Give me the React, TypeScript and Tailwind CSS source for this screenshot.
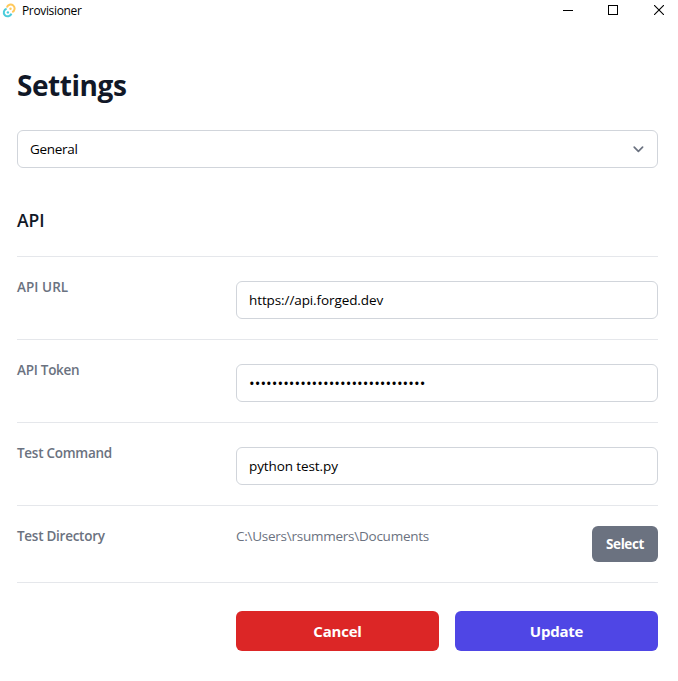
import type { ReactNode } from 'react';

function Field({ label, children }: { label: ReactNode; children: ReactNode }) {
  return (
    <div className="grid grid-cols-[203px_422px] gap-4 border-b border-[#e5e7eb] py-5">
      <dt className="text-[13.5px] leading-5 font-semibold tracking-[-0.27px] text-[#6b7280]">{label}</dt>
      <dd className="flex">{children}</dd>
    </div>
  );
}

function TextBox({ children }: { children: ReactNode }) {
  return (
    <div className="mt-1 flex h-[38px] w-full items-center rounded-md border border-[#d1d5db] px-3 text-[13.5px] leading-5 tracking-[-0.1px] text-black">
      {children}
    </div>
  );
}

export default function App() {
  return (
    <div className="h-[681px] w-[678px] overflow-hidden bg-white font-['Open_Sans','Noto_Sans',sans-serif]">
      <header className="flex h-[21px] items-center justify-between">
        <div className="flex items-center gap-[5px] pl-[2px]">
          <svg width="15" height="15" viewBox="0 0 15 15" fill="none">
            <path d="M4.9 4.6A3.9 3.9 0 1 1 10.2 9.1" stroke="#ffc95c" strokeWidth="2" />
            <path d="M4.6 5.7A3.9 3.9 0 1 0 9.4 10.6" stroke="#4accdb" strokeWidth="2" />
            <circle cx="8.5" cy="5.8" r="1.2" fill="#ffc95c" />
            <circle cx="5.9" cy="9.4" r="1.2" fill="#4accdb" />
          </svg>
          <span className="text-[12px] leading-[20px] tracking-[-0.35px] text-black">Provisioner</span>
        </div>
        <div className="flex items-center pr-[14px] pb-px">
          <svg className="mr-[35px]" width="10" height="10" viewBox="0 0 10 10" shapeRendering="crispEdges">
            <path d="M0 5h10v1H0z" fill="#000" />
          </svg>
          <svg className="mr-9" width="10" height="10" viewBox="0 0 10 10" fill="none" shapeRendering="crispEdges">
            <rect x=".5" y=".5" width="9" height="9" stroke="#000" />
          </svg>
          <svg width="10" height="10" viewBox="0 0 10 10" fill="none" stroke="#000">
            <path d="m0 0 10 10M10 0 0 10" strokeWidth="1.1" />
          </svg>
        </div>
      </header>
      <main className="pl-[17px] pr-5">
        <h1 className="pt-[46px] text-[28px] leading-9 font-bold tracking-[-0.45px] text-[#111827]">Settings</h1>
        <div className="mt-[27px] flex h-[38px] items-center justify-between rounded-md border border-[#d1d5db] pr-[9px] pl-3 text-[13.5px] leading-5 tracking-[-0.3px] text-black">
          <span>General</span>
          <svg width="20" height="20" viewBox="0 0 20 20" fill="none" stroke="#6b7280" strokeWidth="1.7" strokeLinecap="round" strokeLinejoin="round">
            <path d="m6.2 8.2 4.2 4.2 4.2-4.2" />
          </svg>
        </div>
        <h2 className="pt-10 text-[17.5px] leading-6 font-semibold tracking-[-0.1px] text-[#111827]">API</h2>
        <dl className="mt-6 border-t border-[#e5e7eb]">
          <Field label={<span className="tracking-[0.05px]">API URL</span>}>
            <TextBox>https://api.forged.dev</TextBox>
          </Field>
          <Field label="API Token">
            <TextBox>
              <span className="text-[15px] tracking-[0.05px]">•••••••••••••••••••••••••••••••</span>
            </TextBox>
          </Field>
          <Field label="Test Command">
            <TextBox>python test.py</TextBox>
          </Field>
          <Field label="Test Directory">
            <span className="flex-1 text-[13.5px] leading-5 tracking-[-0.25px] text-[#6b7280]">C:\Users\rsummers\Documents</span>
            <button className="h-9 w-[66px] rounded-md bg-[#6b7280] text-[13.5px] leading-5 font-bold tracking-[-0.4px] text-white">Select</button>
          </Field>
        </dl>
        <div className="mt-7 ml-[219px] grid grid-cols-2 gap-4">
          <button className="h-10 rounded-md bg-[#dc2626] pt-px text-[15px] font-bold tracking-[-0.2px] text-white">Cancel</button>
          <button className="h-10 rounded-md bg-[#4f46e5] pt-px text-[15px] font-bold tracking-[-0.25px] text-white">Update</button>
        </div>
      </main>
    </div>
  );
}
